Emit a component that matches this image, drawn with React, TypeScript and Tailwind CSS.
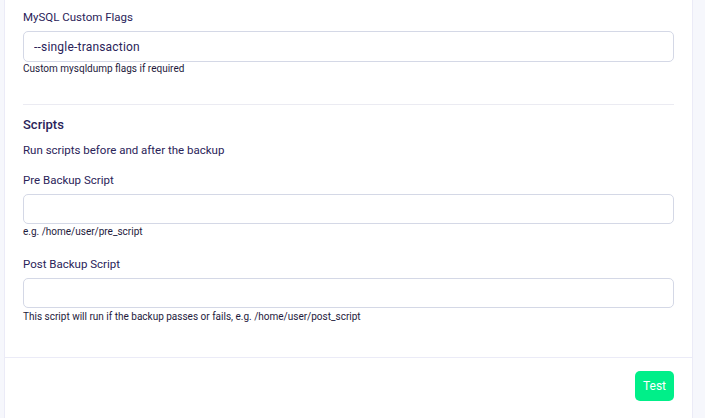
export default function App() {
  const font = { fontFamily: "Roboto, 'Noto Sans', sans-serif" }
  return (
    <div className="w-[705px] h-[418px] overflow-hidden bg-[#f6f7fc] pl-[4px]" style={font}>
      <div className="w-[689px] h-full bg-white border-x border-[#ebebf7] text-[#2a2359]">
        <div className="px-[18px] pt-[9px]">
          {/* MySQL flags */}
          <label className="block text-[11.5px] leading-4">MySQL Custom Flags</label>
          <input
            className="mt-[6px] block w-full h-[31px] rounded-[5px] border border-[#d4d8e6] px-[10px] text-xs tracking-[0.2px] text-[#2a2359] outline-none"
            defaultValue="--single-transaction"
          />
          <p className="mt-[1px] text-[10px] leading-3 text-[#1e1a3c]">Custom mysqldump flags if required</p>

          <div className="mt-[29px] border-t border-[#ebebf2]" />

          {/* Scripts */}
          <h3 className="mt-[10px] text-[13px] leading-5 font-medium">Scripts</h3>
          <p className="mt-[7px] text-[11.5px] leading-4">Run scripts before and after the backup</p>

          <label className="mt-[14px] block text-[11.5px] leading-4">Pre Backup Script</label>
          <input className="mt-[6px] block w-full h-[30px] rounded-[5px] border border-[#d4d8e6] px-[10px] text-xs outline-none" />
          <p className="mt-[2px] text-[10px] leading-3 text-[#1e1a3c]">e.g. /home/user/pre_script</p>

          <label className="mt-[18px] block text-[11.5px] leading-4">Post Backup Script</label>
          <input className="mt-[6px] block w-full h-[30px] rounded-[5px] border border-[#d4d8e6] px-[10px] text-xs outline-none" />
          <p className="mt-[3px] text-[10px] leading-3 text-[#1e1a3c]">
            This script will run if the backup passes or fails, e.g. /home/user/post_script
          </p>
        </div>

        <div className="mt-[34px] border-t border-[#ebebf7]" />

        <div className="flex justify-end px-[18px] pt-[13px]">
          <button className="h-[30px] w-[39px] rounded-[5px] bg-[#00ef89] text-xs text-white">Test</button>
        </div>
      </div>
    </div>
  )
}
